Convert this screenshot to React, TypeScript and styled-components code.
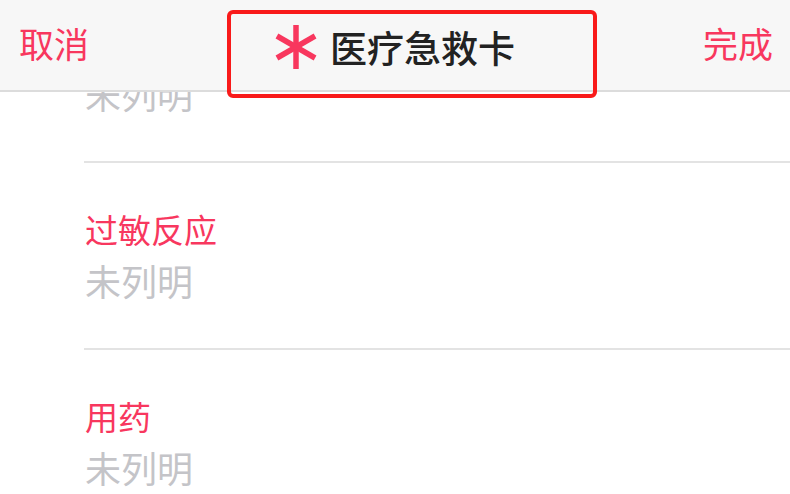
import React from "react";
import styled, { createGlobalStyle } from "styled-components";

const GlobalStyle = createGlobalStyle`
  html, body {
    margin: 0;
    padding: 0;
    background: #ffffff;
  }
  body {
    font-family: "Noto Sans CJK SC", "Noto Sans", sans-serif;
  }
`;

const Page = styled.div`
  position: relative;
  width: 790px;
  height: 494px;
  overflow: hidden;
  background: #ffffff;
`;

const NavBar = styled.header`
  position: absolute;
  top: 0;
  left: 0;
  right: 0;
  z-index: 2;
  height: 90px;
  display: grid;
  grid-template-columns: 1fr auto 1fr;
  align-items: start;
  background: #f7f7f7;
  border-bottom: 2px solid #dcdcdc;
`;

const NavButton = styled.button<{ $side: "left" | "right" }>`
  justify-self: ${(p) => (p.$side === "left" ? "start" : "end")};
  margin: 21px ${(p) => (p.$side === "right" ? "17px" : "0")} 0
    ${(p) => (p.$side === "left" ? "19px" : "0")};
  padding: 0;
  border: none;
  background: none;
  font-family: inherit;
  font-size: 35px;
  line-height: 44px;
  color: #f8375e;
`;

const TitleBox = styled.div`
  margin: 10px 0 0 34px;
  box-sizing: border-box;
  width: 370px;
  height: 88px;
  display: flex;
  align-items: center;
  gap: 12px;
  padding: 0 0 14px 43px;
  border: 4px solid #f91a1a;
  border-radius: 6px;
`;

const Star = styled.svg`
  flex: none;
  width: 44px;
  height: 46px;
`;

const Title = styled.h1`
  margin: 0;
  font-size: 37px;
  line-height: 44px;
  font-weight: 500;
  color: #222222;
`;

const List = styled.div`
  margin-top: -26px;
`;

const Item = styled.section`
  margin-left: 84px;
  padding: 46px 0 46px 1px;
  border-top: 2px solid #e3e3e3;
`;

const Label = styled.div`
  font-size: 33px;
  line-height: 40px;
  color: #f8375e;
`;

const Value = styled.div`
  margin-top: 9px;
  font-size: 36px;
  line-height: 44px;
  color: #c4c4c8;
`;

const rows = [
  { label: "紧急联系人", value: "未列明" },
  { label: "过敏反应", value: "未列明" },
  { label: "用药", value: "未列明" },
];

export default function App() {
  return (
    <Page>
      <GlobalStyle />
      <NavBar>
        <NavButton $side="left">取消</NavButton>
        <TitleBox>
          <Star viewBox="-22 -23 44 46">
            <g stroke="#f8375e" strokeWidth="5.5">
              <line x1="0" y1="-22" x2="0" y2="22" />
              <line x1="0" y1="-22" x2="0" y2="22" transform="rotate(60)" />
              <line x1="0" y1="-22" x2="0" y2="22" transform="rotate(-60)" />
            </g>
          </Star>
          <Title>医疗急救卡</Title>
        </TitleBox>
        <NavButton $side="right">完成</NavButton>
      </NavBar>
      <List>
        {rows.map((r) => (
          <Item key={r.label}>
            <Label>{r.label}</Label>
            <Value>{r.value}</Value>
          </Item>
        ))}
      </List>
    </Page>
  );
}
